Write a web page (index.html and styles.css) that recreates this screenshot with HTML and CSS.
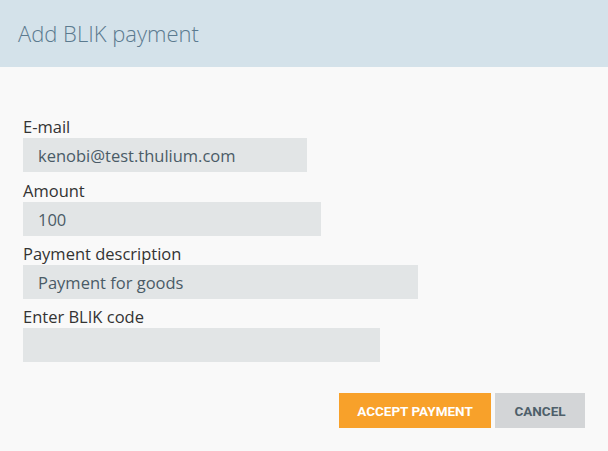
FILE: index.html
```html
<!DOCTYPE html>
<html lang="en">
<head>
    <meta charset="UTF-8">
    <meta name="viewport" content="width=device-width, initial-scale=1.0">
    <title>Add BLIK payment</title>
    <link rel="stylesheet" href="styles.css">
</head>
<body>
    <div class="modal">
        <div class="modal-header">
            <h1 class="modal-title">Add BLIK payment</h1>
        </div>

        <form class="modal-body">
            <div class="field">
                <label for="email">E-mail</label>
                <input type="text" id="email" class="input input-email" value="kenobi@test.thulium.com">
            </div>
            <div class="field">
                <label for="amount">Amount</label>
                <input type="text" id="amount" class="input input-amount" value="100">
            </div>
            <div class="field">
                <label for="description">Payment description</label>
                <input type="text" id="description" class="input input-desc" value="Payment for goods">
            </div>
            <div class="field">
                <label for="blikCode">Enter BLIK code</label>
                <input type="text" id="blikCode" class="input input-code" value="">
            </div>

            <div class="actions">
                <button type="button" class="btn btn-accept">Accept payment</button>
                <button type="button" class="btn btn-cancel">Cancel</button>
            </div>
        </form>
    </div>
</body>
</html>
```

FILE: styles.css
```css
body {
    margin: 0;
    font-family: "Open Sans", Arial, sans-serif;
    background-color: #f9f9f9;
}

.modal {
    width: 608px;
    height: 451px;
    background-color: #f9f9f9;
}

.modal-header {
    height: 67px;
    background-color: #d4e2ea;
    display: flex;
    align-items: center;
    padding: 0 18px;
}

.modal-title {
    margin: 0 0 1px;
    font-size: 22px;
    font-weight: 300;
    color: #5b7a8f;
}

.modal-body {
    padding: 49px 23px 0;
}

.field {
    display: flex;
    flex-direction: column;
    align-items: flex-start;
}

.field label {
    font-size: 16.5px;
    color: #333;
    height: 22px;
    line-height: 22px;
    margin-top: 7px;
}

.field:first-child label {
    margin-top: 0;
}

.field:nth-child(2) label {
    margin-top: 8px;
}

.input {
    box-sizing: border-box;
    height: 34px;
    border: none;
    background-color: #e2e5e6;
    padding: 0 15px;
    font-family: "Open Sans", Arial, sans-serif;
    font-size: 16.5px;
    color: #4a5b66;
    outline: none;
}

.input-email {
    width: 284px;
}

.input-amount {
    width: 298px;
}

.input-desc {
    width: 395px;
}

.input-code {
    width: 357px;
}

.actions {
    display: flex;
    justify-content: flex-end;
    gap: 4px;
    margin-top: 31px;
}

.btn {
    cursor: pointer;
    height: 35px;
    border: none;
    font-family: Roboto, Arial, sans-serif;
    font-weight: bold;
    font-size: 13.5px;
    text-transform: uppercase;
}

.btn-accept {
    width: 152px;
    background-color: #f8a12a;
    color: white;
}

.btn-cancel {
    width: 90px;
    background-color: #d3d5d7;
    color: #4e5f6a;
}
```
